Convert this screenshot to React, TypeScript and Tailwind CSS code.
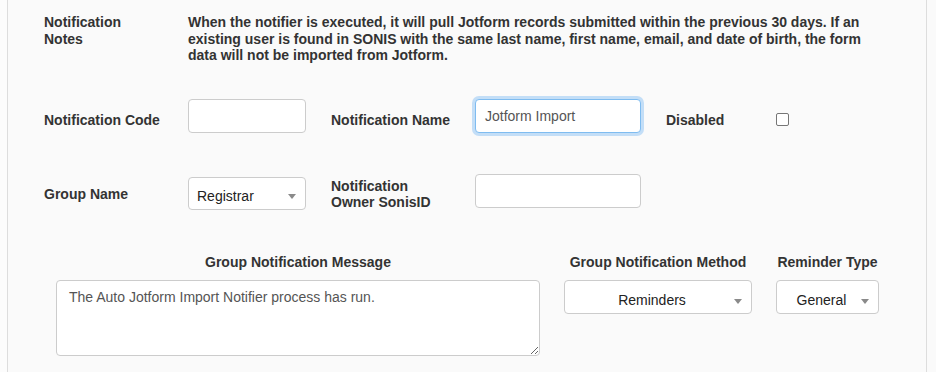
import React from "react";

const Arrow = () => (
  <svg width="8" height="5" viewBox="0 0 8 5" className="shrink-0">
    <path d="M0 0 H8 L4 5 Z" fill="#8a8a8a" />
  </svg>
);

function SelectBox({
  value,
  width,
  center,
}: {
  value: string;
  width: string;
  center?: boolean;
}) {
  return (
    <div
      className={`${width} h-[34px] bg-white border border-[#cccccc] rounded-[4px] relative flex items-center pt-[6px] text-[14px] text-[#222222] ${
        center ? "justify-center pl-[8px] pr-[20px]" : "pl-[8px]"
      }`}
    >
      <span>{value}</span>
      <span className="absolute right-[9px] top-[18px] flex">
        <Arrow />
      </span>
    </div>
  );
}

export default function App() {
  return (
    <div
      className="w-[936px] h-[372px] overflow-hidden flex bg-[#fafafa] text-[#333333]"
      style={{ fontFamily: '"Liberation Sans", Arial, sans-serif' }}
    >
      <div className="w-[7px] shrink-0 bg-[#fcfcfc]" />
      <div className="w-px shrink-0 bg-[#dddddd]" />
      <div className="flex-1 flex flex-col pl-[36px] pt-[14px]">
        {/* Row 1 */}
        <div className="flex text-[14px] font-bold leading-[16.5px]">
          <div className="w-[144px] shrink-0">
            Notification
            <br />
            Notes
          </div>
          <div className="w-[692px]">
            When the notifier is executed, it will pull Jotform records submitted within the
            previous 30 days. If an existing user is found in SONIS with the same last name,
            first name, email, and date of birth, the form data will not be imported from
            Jotform.
          </div>
        </div>

        {/* Row 2 */}
        <div className="flex items-center h-[43px] mt-[35px] text-[14px] font-bold">
          <div className="w-[144px] shrink-0">Notification Code</div>
          <div className="w-[118px] h-[34px] self-start bg-white border border-[#cccccc] rounded-[4px]" />
          <div className="w-[144px] ml-[25px] shrink-0">Notification Name</div>
          <div className="w-[166px] h-[34px] self-start bg-white border border-[#7fbcf0] rounded-[4px] shadow-[0_0_0_3px_rgba(128,188,245,0.45)] flex items-center pl-[9px] pt-[1px] text-[14px] font-normal text-[#555555]">
            Jotform Import
          </div>
          <div className="w-[110px] ml-[25px] shrink-0">Disabled</div>
          <div className="w-[13px] h-[13px] mt-[-2px] bg-white border border-[#767676] rounded-[2px]" />
        </div>

        {/* Row 3 */}
        <div className="flex items-center h-[41px] mt-[32px] text-[14px] font-bold leading-[16.5px]">
          <div className="w-[144px] shrink-0">Group Name</div>
          <div className="self-start mt-[3px] font-normal">
            <div className="w-[118px] h-[33px] bg-white border border-[#cccccc] rounded-[4px] relative flex items-center pl-[8px] pt-[6px] text-[14px] text-[#222222]">
              <span>Registrar</span>
              <span className="absolute right-[9px] top-[16px] flex">
                <Arrow />
              </span>
            </div>
          </div>
          <div className="w-[144px] ml-[25px] shrink-0">
            Notification
            <br />
            Owner SonisID
          </div>
          <div className="w-[166px] h-[34px] self-start bg-white border border-[#cccccc] rounded-[4px]" />
        </div>

        {/* Row 4 */}
        <div className="flex mt-[39px] ml-[12px] text-[14px] font-bold leading-[16px]">
          <div className="w-[484px] flex flex-col items-center">
            <div className="h-[16px] whitespace-nowrap">Group Notification Message</div>
            <textarea
              readOnly
              defaultValue="The Auto Jotform Import Notifier process has run."
              className="mt-[10px] w-[484px] h-[76px] bg-white border border-[#cccccc] rounded-[4px] px-[12px] py-[6px] text-[14px] leading-[20px] font-normal text-[#555555] outline-none"
              style={{ fontFamily: '"Liberation Sans", Arial, sans-serif' }}
            />
          </div>
          <div className="w-[188px] ml-[24px] flex flex-col items-center">
            <div className="h-[16px] whitespace-nowrap">Group Notification Method</div>
            <div className="mt-[10px] font-normal">
              <SelectBox value="Reminders" width="w-[188px]" center />
            </div>
          </div>
          <div className="w-[103px] ml-[24px] flex flex-col items-center">
            <div className="h-[16px] whitespace-nowrap">Reminder Type</div>
            <div className="mt-[10px] font-normal">
              <SelectBox value="General" width="w-[103px]" center />
            </div>
          </div>
        </div>
      </div>
      <div className="w-px shrink-0 bg-[#dddddd]" />
      <div className="w-[9px] shrink-0 bg-[#fafafa]" />
    </div>
  );
}
